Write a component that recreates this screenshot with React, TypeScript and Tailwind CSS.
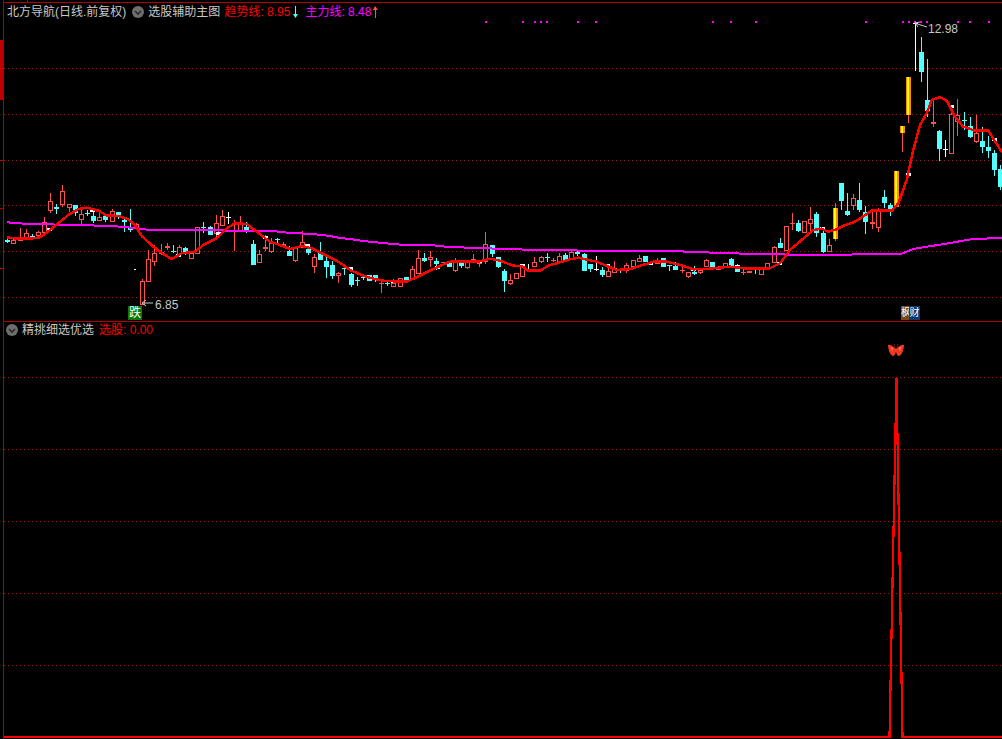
import React from "react";

type C = [string, number, number, number, number];
const A: C[] = [
["c",176,179,186,190],["r",178,181,188,190],["r",145,176,178,178],["r",148,160,172,176],["c",163,168,171,175],["r",153,157,165,172],["r",112,125,155,158],["r",40,64,90,98],["c",72,80,88,102],["r",15,33,73,80],
["r",72,73,82,97],["c",75,75,100,108],["r",85,103,116,132],["c",90,100,103,108],["c",85,108,124,128],["r",97,112,119,122],["c",100,108,120,125],["r",88,92,122,125],["c",97,97,112,118],["c",112,120,125,155],
["c",87,140,150,155],["r",128,133,145,148],["r",297,303,372,372],["r",210,237,303,305],["r",195,219,242,258],["r",192,215,218,225],["f",188,197,203,210],["c",195,212,215,220],["r",195,202,222,230],["c",200,205,222,225],
["r",215,220,233,233],["r",140,142,220,222],["c",125,142,145,158],["c",138,142,165,165],["r",105,130,158,170],["r",90,108,135,135],["w",97,112,115,132],["r",120,150,152,213],["r",108,130,150,150],["c",125,140,152,158],
["c",180,192,255,255],["r",210,223,246,247],["r",165,202,205,212],["r",175,190,214,220],["c",173,178,181,192],["f",185,193,198,205],["c",198,212,228,228],["r",198,205,241,245],["r",153,187,200,205],["c",192,208,220,225],
["r",222,230,258,278],["c",185,220,240,240],["c",225,243,262,293],["c",243,255,288,298],["r",275,280,285,310],
];
const B: C[] = [
["c",135,143,148,165],["c",160,162,195,200],["c",172,180,183,198],["c",168,170,175,180],["c",165,165,182,182],["c",165,165,180,186],["f",178,188,193,219],["c",184,188,193,198],["r",177,188,198,198],["r",175,175,198,198],
["c",170,170,185,185],["r",138,147,175,175],["r",90,114,158,160],["c",98,113,123,125],["r",93,112,118,140],["c",113,123,132,150],["f",125,125,127,135],["c",125,127,140,140],["r",113,127,150,155],["c",120,127,137,145],
["r",122,122,140,146],["f",102,117,125,125],["r",120,120,130,140],["r",37,73,123,132],["c",75,75,102,112],["c",112,112,140,145],["c",148,153,183,216],["r",162,181,190,195],["r",160,160,174,178],["r",133,135,167,172],
["w",133,146,148,148],["r",112,126,137,140],["r",108,112,122,128],["c",100,111,115,125],["f",113,121,123,125],["r",100,108,125,128],["c",100,105,120,125],["r",90,95,115,120],["c",90,96,101,108],["c",100,102,153,153],
["c",132,132,147,155],["w",108,148,151,152],["c",140,150,165,170],["r",132,153,167,168],["r",123,145,155,155],["c",145,147,150,160],["r",130,136,150,158],["r",120,120,137,140],["r",105,114,122,125],["c",108,108,125,125],
["f",125,126,130,133],["r",115,122,128,133],["c",113,113,141,141],["c",135,136,139,152],["c",125,137,150,150],
];
const Cc: C[] = [
["f",285,300,304,310],["r",305,307,317,323],["c",288,305,312,315],["r",298,300,307,312],["r",268,270,287,288],["c",275,275,292,292],["r",288,290,298,298],["r",280,280,290,293],["c",265,268,290,292],["c",282,293,305,305],
["f",298,305,310,315],["f",303,303,308,308],["c",296,296,300,312],["r",292,298,311,312],["r",278,280,293,295],["r",228,232,275,278],["c",205,220,233,235],["r",168,168,240,240],["f",128,158,161,180],["c",150,160,183,185],
["r",153,153,185,190],["r",110,148,160,185],["c",125,132,190,200],["c",170,190,245,250],["r",207,225,243,245],["g",100,114,207,212],["c",40,40,93,120],["c",68,123,135,137],["r",72,85,105,120],["c",40,90,120,125],
["c",108,125,155,192],["f",122,156,162,178],["r",115,122,172,185],["c",60,82,98,115],["c",100,105,120,137],["g",3,3,110,110],
];
const D: C[] = [
["g",348,348,368,425],["g",201,201,315,338],["w",37,39,42,183],["c",82,126,185,215],["c",148,270,303,320],["f",270,336,341,350],["c",360,363,417,452],["w",390,417,419,440],["r",285,313,428,430],["r",268,315,332,378],
["c",307,330,333,360],["c",320,348,380,385],["r",315,370,392,398],["c",350,393,411,430],["c",378,411,422,443],["c",420,430,480,497],["c",465,477,530,540],
];
const y1 = (v: number, o: number) => Math.round(o + v / 3);
const candles = [
  ...A.map((c) => [c[0], y1(c[1],180), y1(c[2],180), y1(c[3],180), y1(c[4],180)] as C),
  ...B.map((c) => [c[0], y1(c[1],220), y1(c[2],220), y1(c[3],220), y1(c[4],220)] as C),
  ...Cc.map((c) => [c[0], y1(c[1],170), y1(c[2],170), y1(c[3],170), y1(c[4],170)] as C),
  ...D.map((c) => [c[0], y1(c[1],10), y1(c[2],10), y1(c[3],10), y1(c[4],10)] as C),
];
const pts = (a: number[][], ox: number, oy: number) => a.map((p) => `${(ox + p[0] / 3).toFixed(1)},${(oy + p[1] / 3).toFixed(1)}`).join(" ");
const red = [
  pts([[22,172],[50,176],[90,176],[120,172],[140,158],[175,130],[205,105],[235,87],[260,83],[295,92],[320,106],[355,108],[385,118],[405,135],[425,168],[460,200],[490,222],[515,237],[545,220],[585,215],[610,195],[650,175],[680,145],[705,130],[740,132],[770,155],[810,185],[840,195],[870,207],[905,198],[935,205],[975,225]],0,180),
  pts([[0,128],[30,150],[70,167],[100,176],[135,183],[200,185],[230,172],[280,147],[330,125],[415,125],[450,116],[480,122],[520,137],[545,138],[565,152],[600,152],[625,137],[690,118],[715,113],[770,125],[830,150],[870,147],[940,125],[980,125]],340,220),
  pts([[0,285],[40,298],[80,297],[150,290],[205,296],[270,295],[300,280],[330,240],[400,180],[425,176],[445,185],[470,178],[490,167],[525,155],[575,122],[635,122],[655,100],[680,30]],680,170),
  pts([[120,568],[140,510],[160,420],[180,345],[200,310],[215,270],[240,262],[260,272],[285,320],[310,350],[345,362],[385,362],[425,425]],860,10),
  "1003,152",
].join(" ");
const purple = "7,222 12,223 32,224 75,225 112,226 135,228 150,230 175,230 273,231 290,233 313,234 330,236 340,238 350,239 357,240 363,241 373,242 382,243 393,244 405,245 430,245 448,247 480,248 503,249 540,250 613,251 680,251 687,252 730,253 748,254 822,255 883,254 902,253.5 913,249 950,243 973,239 1002,238";
const dots = [485,522,534,540,546,577,595,712,730,755,865,902,908,914,920,926,957,969,988];
const marks = [[49,229],[92,210],[178,255],[218,233],[265,237],[307,245],[350,268],[393,281],[437,267],[479,261],[522,265],[607,265],[650,263],[693,269],[737,266],[779,263],[822,228],[908,174],[951,106],[994,139]];
const grid1 = [68,114,160,205,251,297];
const grid2 = [377,449,521,593,665];

function Candle({ c, x }: { c: C; x: number }) {
  const [t, wt, bt, bb, wb] = c;
  const col = t === "c" ? "#54ffff" : t === "w" ? "#ffffff" : "#ff5050";
  const h = Math.max(bb - bt, 1);
  return (
    <g>
      <rect x={x} y={wt} width={1} height={Math.max(wb - wt, 1)} fill={col} />
      {t === "r" ? (
        <rect x={x - 1.5} y={bt + 0.5} width={4} height={h} fill="#000" stroke={col} strokeWidth={1} />
      ) : t === "g" ? (
        <>
          <rect x={x - 2} y={bt} width={5} height={h} fill="#ff8c00" />
          <rect x={x - 1} y={bt} width={2} height={h} fill="#ffff00" />
        </>
      ) : (
        <rect x={x - 2} y={bt} width={5} height={h} fill={col} />
      )}
    </g>
  );
}

function Chevron() {
  return (
    <svg width="12" height="12" viewBox="0 0 12 12" className="shrink-0">
      <circle cx="6" cy="6" r="6" fill="#6e6e6e" />
      <path d="M3 5 L6 8 L9 5" fill="none" stroke="#2a2a2a" strokeWidth="1.6" />
    </svg>
  );
}

function Arrow({ color, up }: { color: string; up?: boolean }) {
  return (
    <svg width="7" height="12" viewBox="0 0 7 12" className="shrink-0">
      {up ? (
        <path d="M3 0 L6 4 L4 4 L4 12 L3 12 L3 4 L1 4 Z" fill={color} />
      ) : (
        <path d="M3 0 L4 0 L4 8 L6 8 L3.5 12 L1 8 L3 8 Z" fill={color} />
      )}
    </svg>
  );
}

const font = "[font-family:'Liberation_Sans','Noto_Sans_CJK_SC',sans-serif]";

export default function App() {
  return (
    <div className={`flex w-[1002px] h-[739px] overflow-hidden bg-black text-xs leading-none ${font}`}>
      <div className="w-[3px] shrink-0 flex flex-col">
        <div className="mt-[40px] h-[60px] bg-[#c00000]" />
        <div className="mt-[60px] h-px bg-[#c00000]" />
        <div className="mt-[47px] h-px bg-[#c00000]" />
        <div className="mt-[59px] h-px bg-[#c00000]" />
      </div>
      <div className="flex-1 flex flex-col border-l border-[#b00000]">
        <div className="h-[2px] w-full">
          <div className="ml-[23px] w-px h-[2px] bg-[#b00000]" />
        </div>
        <div className="relative h-[320px] border-y border-[#b00000]">
          <svg className="absolute left-0 top-0" width="998" height="318" viewBox="4 3 998 318" shapeRendering="crispEdges">
            {grid1.map((y) => (
              <line key={y} x1="4" x2="1002" y1={y + 0.5} y2={y + 0.5} stroke="#a01818" strokeDasharray="1 3" shapeRendering="auto" />
            ))}
            {dots.map((x) => (
              <rect key={x} x={x} y={21} width={2} height={2} fill="#ff00ff" />
            ))}
            {candles.map((c, i) => (
              <Candle key={i} c={c} x={Math.round(7.3 + 6.13 * i)} />
            ))}
            {marks.map((m, i) => (
              <rect key={i} x={m[0] - 2} y={m[1] - 1} width={5} height={3} fill="#fff" />
            ))}
            <rect x="134" y="269" width="2" height="1" fill="#fff" />
            <polyline points={purple} fill="none" stroke="#ff00ff" strokeWidth="2" />
            <polyline points={red} fill="none" stroke="#ff0000" strokeWidth="2.5" />
            <g shapeRendering="auto" fill="none" stroke="#c8c8c8" strokeWidth="1">
              <path d="M153 303 L143 303 M146 300 L142 303 L146 306" />
              <path d="M927 27 L916 23.5 M918 27 L915 23 L920 22" />
            </g>
          </svg>
          <div className="relative flex items-center h-[17px] pl-[3px] text-[#c8c8c8]">
            <span>北方导航(日线.前复权)</span>
            <span className="ml-[6px]"><Chevron /></span>
            <span className="ml-[4px]">选股辅助主图</span>
            <span className="ml-[4px] text-[#ff0000]">趋势线: 8.95</span>
            <span className="ml-[2px]"><Arrow color="#54ffff" /></span>
            <span className="ml-[6px] text-[#ff00ff]">主力线: 8.48</span>
            <span className="ml-[1px]"><Arrow color="#ff5050" up /></span>
          </div>
          <span className="absolute left-[124px] top-[303px] w-[14px] h-[14px] bg-[#087808] text-white text-center leading-[14px]">跌</span>
          <span className="absolute left-[151px] top-[296px] text-[#c8c8c8]">6.85</span>
          <span className="absolute left-[924px] top-[20px] text-[#c8c8c8]">12.98</span>
          <span className="absolute left-[897px] top-[303px] w-[19px] h-[14px] flex overflow-hidden text-white text-[10px] leading-[14px] text-center">
            <span className="w-[8px] bg-[#7a4a14]">枫</span>
            <span className="w-[11px] bg-[#0a3a6e]">财</span>
          </span>
        </div>
        <div className="relative flex-1">
          <svg className="absolute left-0 top-0" width="998" height="417" viewBox="4 322 998 417" shapeRendering="crispEdges">
            {grid2.map((y) => (
              <line key={y} x1="4" x2="1002" y1={y + 0.5} y2={y + 0.5} stroke="#a01818" strokeDasharray="1 3" shapeRendering="auto" />
            ))}
            <polyline points="4,737 889.5,737 896.5,378 902.5,737 1002,737" fill="none" stroke="#ff0000" strokeWidth="2.2" strokeLinejoin="miter" />
            <g shapeRendering="auto">
              <path d="M896 349 C893 346 890 344 888 345 C888 349 890 355 893 356 C895 356 895.5 353 896 352 C896.5 353 897 356 899 356 C902 355 904 349 904 345 C902 344 899 346 896 349 Z" fill="#f03a20" />
              <path d="M893 348 L891 347 L892 351 Z M899 348 L901 347 L900 351 Z" fill="#ff9a80" />
              <path d="M895.5 349 L894 344 M896.5 349 L898 344" stroke="#a02020" strokeWidth="0.7" fill="none" />
            </g>
          </svg>
          <div className="relative flex items-center h-[15px] pl-[2px] text-[#c8c8c8]">
            <Chevron />
            <span className="ml-[4px]">精挑细选优选</span>
            <span className="ml-[5px] text-[#ff0000]">选股: 0.00</span>
          </div>
        </div>
      </div>
    </div>
  );
}
